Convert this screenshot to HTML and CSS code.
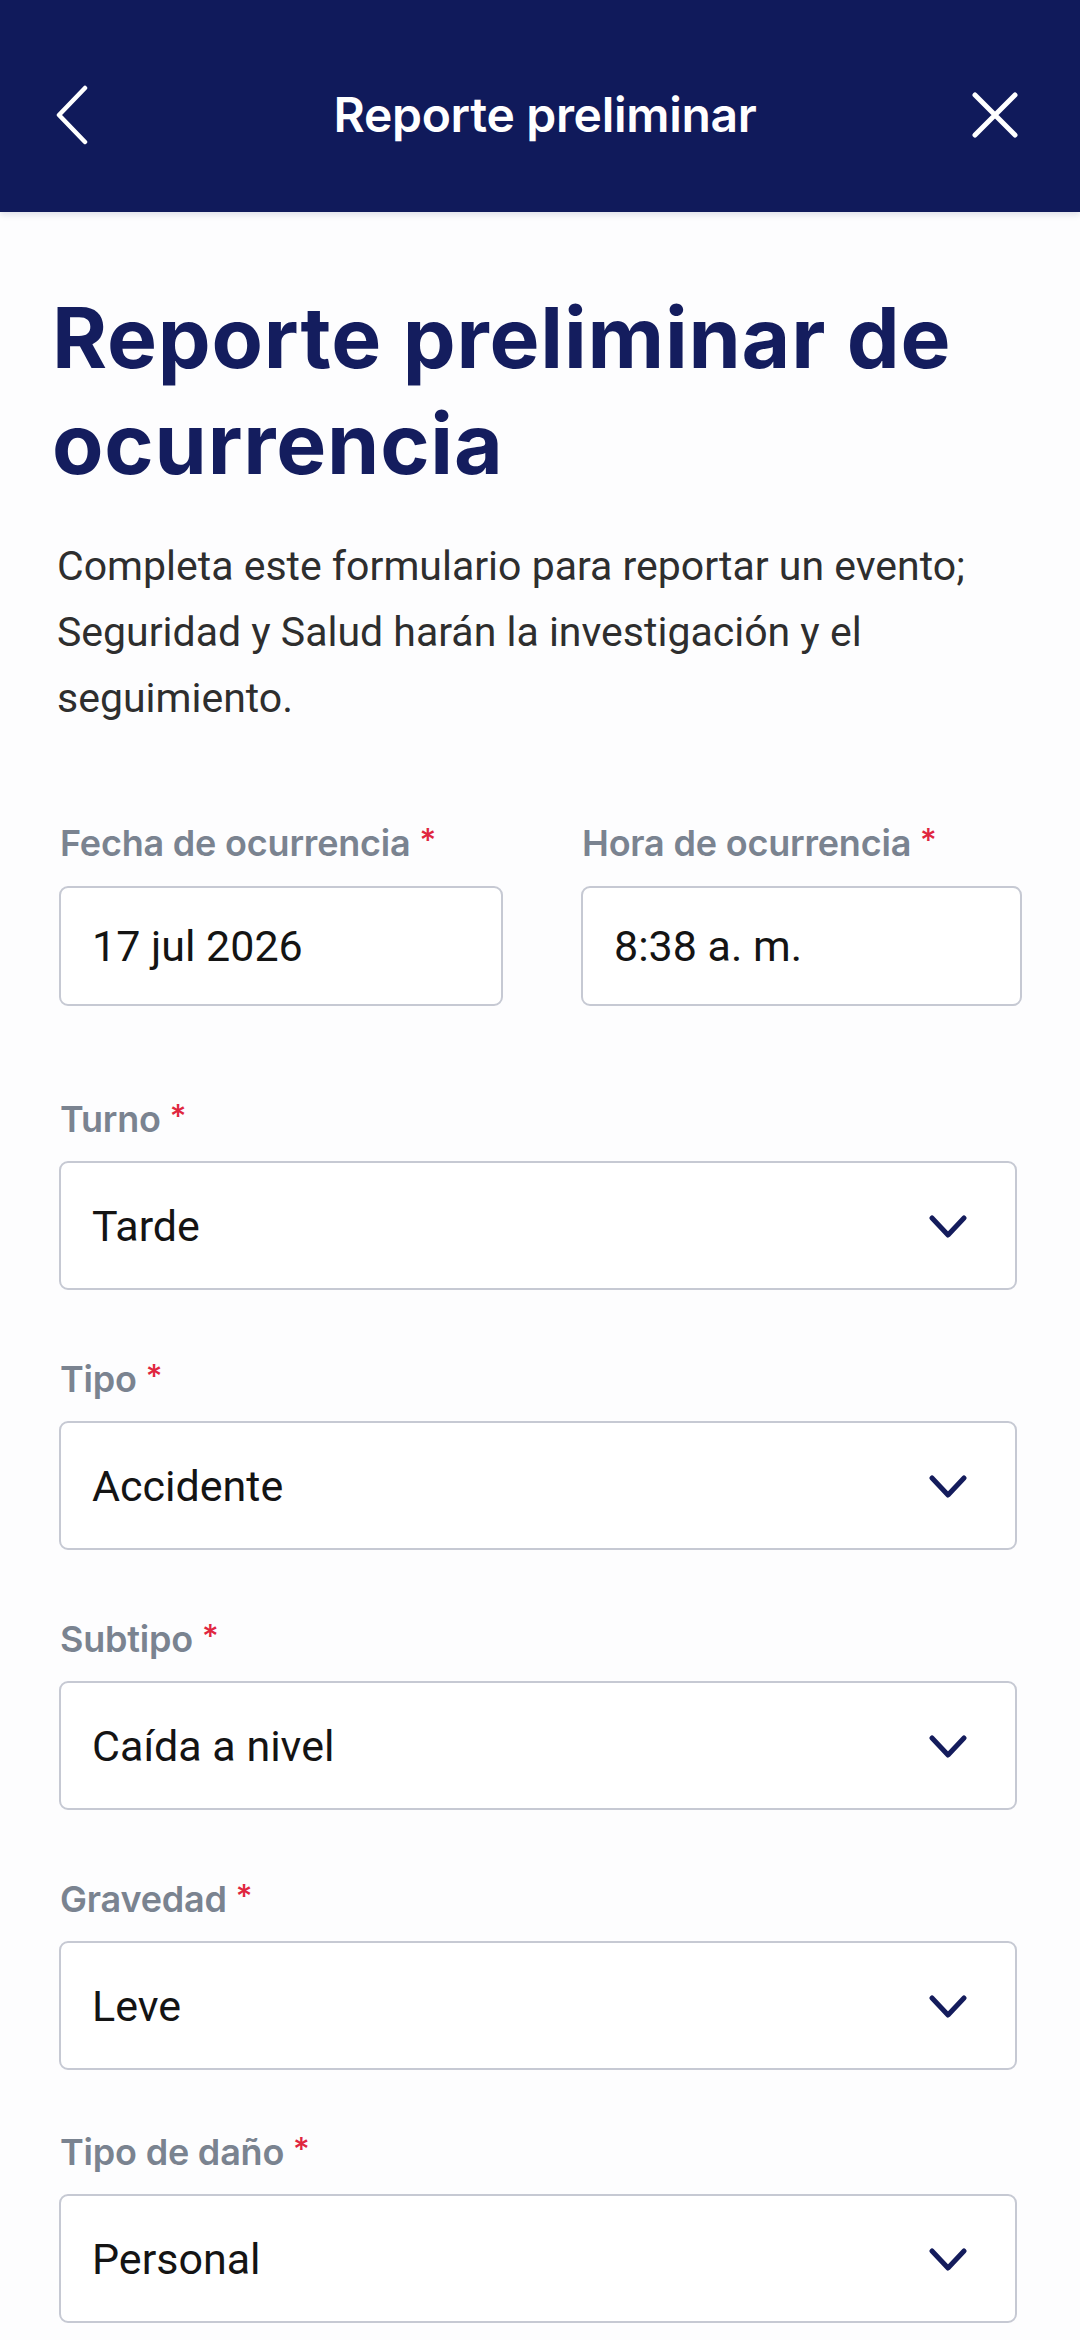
FILE: index.html
```html
<!DOCTYPE html>
<html lang="es">
<head>
<meta charset="utf-8">
<title>Reporte preliminar</title>
<link rel="stylesheet" href="styles.css">
</head>
<body>
<header class="topbar">
  <div class="topbar-slot topbar-slot-left">
    <svg class="icon-back" viewBox="0 0 34 60" width="34" height="60" aria-hidden="true">
      <path d="M30 3 L4 30 L30 57" fill="none" stroke="#ffffff" stroke-width="4.5" stroke-linecap="round" stroke-linejoin="round"/>
    </svg>
  </div>
  <h1 class="topbar-title">Reporte preliminar</h1>
  <div class="topbar-slot topbar-slot-right">
    <svg class="icon-close" viewBox="0 0 46 46" width="46" height="46" aria-hidden="true">
      <path d="M3 3 L43 43 M43 3 L3 43" fill="none" stroke="#ffffff" stroke-width="5" stroke-linecap="round"/>
    </svg>
  </div>
</header>

<main class="content">
  <h2 class="page-title">Reporte preliminar de ocurrencia</h2>
  <p class="intro">Completa este formulario para reportar un evento; Seguridad y Salud harán la investigación y el seguimiento.</p>

  <div class="row">
    <div class="field">
      <div class="label">Fecha de ocurrencia <span class="req">*</span></div>
      <div class="box box-short"><span class="value">17 jul 2026</span></div>
    </div>
    <div class="field">
      <div class="label">Hora de ocurrencia <span class="req">*</span></div>
      <div class="box box-short"><span class="value">8:38 a. m.</span></div>
    </div>
  </div>

  <div class="field field-select">
    <div class="label">Turno <span class="req">*</span></div>
    <div class="box box-select">
      <span class="value">Tarde</span>
      <svg class="chev" viewBox="0 0 38 24" width="38" height="24" aria-hidden="true"><path d="M3 3 L19 20 L35 3" fill="none" stroke="#141c5c" stroke-width="5" stroke-linecap="round" stroke-linejoin="round"/></svg>
    </div>
  </div>

  <div class="field field-select">
    <div class="label">Tipo <span class="req">*</span></div>
    <div class="box box-select">
      <span class="value">Accidente</span>
      <svg class="chev" viewBox="0 0 38 24" width="38" height="24" aria-hidden="true"><path d="M3 3 L19 20 L35 3" fill="none" stroke="#141c5c" stroke-width="5" stroke-linecap="round" stroke-linejoin="round"/></svg>
    </div>
  </div>

  <div class="field field-select">
    <div class="label">Subtipo <span class="req">*</span></div>
    <div class="box box-select">
      <span class="value">Caída a nivel</span>
      <svg class="chev" viewBox="0 0 38 24" width="38" height="24" aria-hidden="true"><path d="M3 3 L19 20 L35 3" fill="none" stroke="#141c5c" stroke-width="5" stroke-linecap="round" stroke-linejoin="round"/></svg>
    </div>
  </div>

  <div class="field field-select">
    <div class="label">Gravedad <span class="req">*</span></div>
    <div class="box box-select">
      <span class="value">Leve</span>
      <svg class="chev" viewBox="0 0 38 24" width="38" height="24" aria-hidden="true"><path d="M3 3 L19 20 L35 3" fill="none" stroke="#141c5c" stroke-width="5" stroke-linecap="round" stroke-linejoin="round"/></svg>
    </div>
  </div>

  <div class="field field-select field-last">
    <div class="label">Tipo de daño <span class="req">*</span></div>
    <div class="box box-select">
      <span class="value">Personal</span>
      <svg class="chev" viewBox="0 0 38 24" width="38" height="24" aria-hidden="true"><path d="M3 3 L19 20 L35 3" fill="none" stroke="#141c5c" stroke-width="5" stroke-linecap="round" stroke-linejoin="round"/></svg>
    </div>
  </div>
</main>
</body>
</html>
```

FILE: styles.css
```css
* {
  box-sizing: border-box;
}

html, body {
  margin: 0;
  padding: 0;
  background: #fdfdfe;
}

body {
  width: 1080px;
  min-height: 2340px;
  font-family: "Inter", "Noto Sans", sans-serif;
  overflow: hidden;
}

.topbar {
  height: 212px;
  padding: 18px 63px 0 57px;
  background: #101a5b;
  display: flex;
  align-items: center;
  box-shadow: 0 3px 6px rgba(16, 26, 91, 0.12);
  position: relative;
  z-index: 1;
}

.topbar-slot {
  width: 100px;
  display: flex;
  align-items: center;
}

.topbar-slot-right {
  justify-content: flex-end;
}

.icon-back {
  display: block;
  width: 34px;
  height: 60px;
  margin-left: -2px;
}

.icon-close {
  display: block;
  width: 46px;
  height: 46px;
  margin-right: -1px;
}

.topbar-title {
  flex: 1;
  margin: 0;
  text-align: center;
  color: #ffffff;
  font-family: "Inter", sans-serif;
  font-weight: 600;
  font-size: 48px;
  line-height: 60px;
  letter-spacing: -0.3px;
  padding-left: 16px;
}

.content {
  padding: 0 63px 0 59px;
}

.page-title {
  margin: 73px 0 0 -7px;
  color: #141d5e;
  font-family: "Inter", sans-serif;
  font-weight: 700;
  font-size: 84px;
  line-height: 106px;
  letter-spacing: 0.8px;
}

.intro {
  margin: 36px 0 0 -2px;
  color: #2e2e2e;
  font-family: "Roboto", "Noto Sans", sans-serif;
  font-weight: 400;
  font-size: 41px;
  line-height: 66px;
}

.row {
  display: grid;
  grid-template-columns: 444px 441px;
  column-gap: 78px;
  margin-top: 88px;
}

.field-select {
  margin-top: 65px;
}

.row + .field-select {
  margin-top: 89px;
}

.field-last {
  margin-top: 58px;
}

.label {
  color: #7a8390;
  font-family: "Inter", sans-serif;
  font-weight: 600;
  font-size: 36px;
  line-height: 44px;
  padding-left: 1px;
  letter-spacing: -0.2px;
}

.req {
  color: #e0263f;
  font-weight: 500;
  vertical-align: 4px;
  font-size: 32px;
}

.box {
  margin-top: 21px;
  border: 2px solid #c6c9d3;
  border-radius: 9px;
  background: #ffffff;
  display: flex;
  align-items: center;
  padding: 0 48px 0 31px;
}

.box-short {
  height: 120px;
}

.box-select {
  height: 129px;
  margin-top: 20px;
  justify-content: space-between;
}

.value {
  color: #141414;
  font-family: "Roboto", "Noto Sans", sans-serif;
  font-weight: 400;
  font-size: 43px;
  line-height: 50px;
}

.chev {
  display: block;
  width: 38px;
  height: 24px;
  margin-top: 2px;
}
```
